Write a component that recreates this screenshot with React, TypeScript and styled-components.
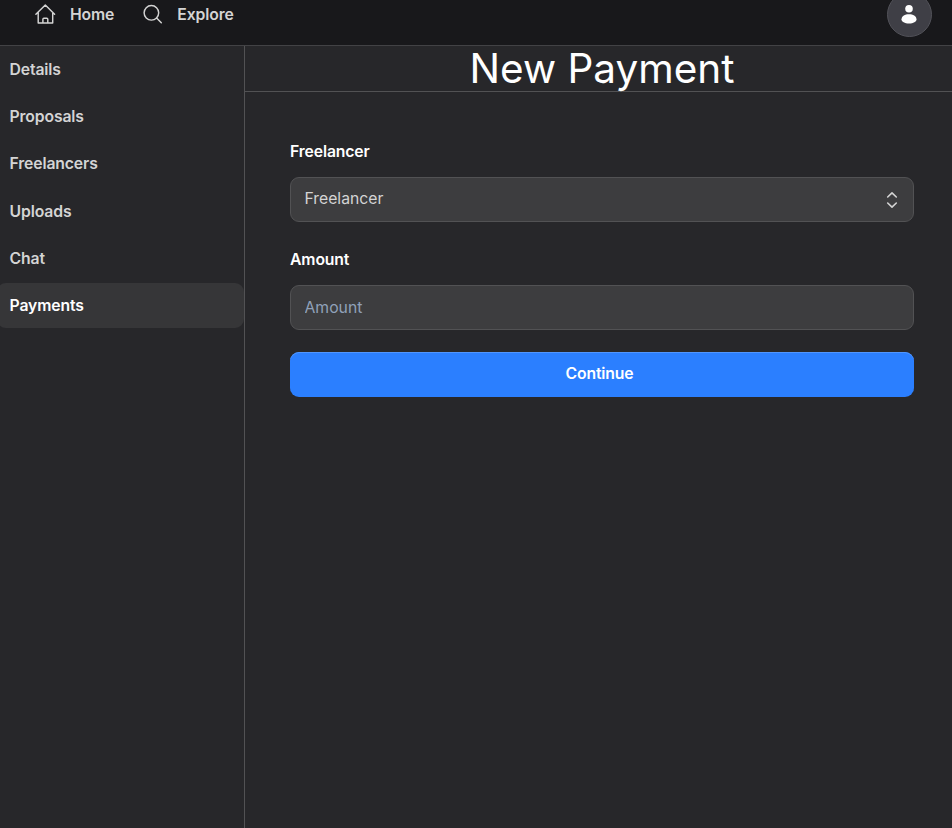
import React from 'react';
import styled, { createGlobalStyle } from 'styled-components';

const GlobalStyle = createGlobalStyle`
  *, *::before, *::after { box-sizing: border-box; }
  body {
    margin: 0;
    background: #27272a;
    color: #fff;
    font-family: Inter, "Liberation Sans", sans-serif;
    font-size: 15.75px;
    line-height: 22.5px;
    overflow: hidden;
  }
  button, input { font: inherit; }
`;

const Page = styled.div`
  height: 828px;
  display: flex;
  flex-direction: column;
  background: #27272a;
`;

const TopBar = styled.header`
  flex: none;
  height: 46px;
  display: flex;
  justify-content: space-between;
  align-items: flex-start;
  padding: 0 20px 0 34px;
  background: #18181b;
  border-bottom: 1px solid #424245;
`;

const Nav = styled.nav`
  display: flex;
  gap: 27px;
  padding-top: 3px;
`;

const NavLink = styled.a`
  display: flex;
  align-items: flex-start;
  gap: 14px;
  color: #d4d4d4;
  font-weight: 600;
  letter-spacing: -0.13px;
  svg { display: block; flex: none; }
  span { padding-top: 1px; }
`;

const Avatar = styled.button`
  width: 45px;
  height: 45px;
  margin-top: -8px;
  padding: 0 1px 1px 0;
  display: grid;
  place-items: center;
  border-radius: 50%;
  border: 1px solid #525259;
  background: #3f3f46;
`;

const Body = styled.div`
  flex: 1;
  display: flex;
  min-height: 0;
`;

const Sidebar = styled.aside`
  width: 245px;
  flex: none;
  display: flex;
  flex-direction: column;
  gap: 2.25px;
  padding-top: 1px;
  border-right: 1px solid #525254;
`;

const SideItem = styled.a<{ $active?: boolean }>`
  height: 45px;
  display: flex;
  align-items: center;
  margin-left: -3px;
  padding: 1.2px 9.5px 0 12.5px;
  border-radius: 9px;
  font-weight: 600;
  letter-spacing: -0.13px;
  color: ${(p) => (p.$active ? '#fff' : '#d4d4d4')};
  background: ${(p) => (p.$active ? '#363638' : 'transparent')};
`;

const Main = styled.main`
  flex: 1;
  min-width: 0;
`;

const Title = styled.h1`
  height: 46px;
  margin: 0;
  padding-left: 7px;
  border-bottom: 1px solid #525254;
  text-align: center;
  font-size: 40.5px;
  line-height: 45px;
  font-weight: 400;
`;

const Form = styled.div`
  display: flex;
  flex-direction: column;
  padding: 49px 38px 0 45px;
`;

const Field = styled.div`
  display: flex;
  flex-direction: column;
  gap: 14px;
  margin-bottom: 27px;
  &:last-of-type { margin-bottom: 22px; }
`;

const Label = styled.label`
  height: 22px;
  font-weight: 600;
  letter-spacing: -0.13px;
`;

const SelectBox = styled.button`
  height: 45px;
  display: flex;
  align-items: center;
  justify-content: space-between;
  padding: 0 14px 0 13.5px;
  border: 1px solid #525254;
  border-radius: 9px;
  background: #3d3d3f;
  color: #d4d4d4;
`;

const Input = styled.input`
  height: 45px;
  width: 100%;
  padding: 0 13.5px;
  border: 1px solid #525254;
  border-radius: 9px;
  background: #3d3d3f;
  color: #fff;
  &::placeholder { color: #90a1b9; opacity: 1; }
`;

const Submit = styled.button`
  height: 45px;
  border: 0;
  border-radius: 9px;
  background: #2b7fff;
  box-shadow: inset 0 1px #5096ff;
  color: #fff;
  font-weight: 600;
  letter-spacing: -0.13px;
  padding: 0 5px 0 0;
`;

const HomeIcon = () => (
  <svg width="22" height="22" viewBox="0 0 22 22" fill="none" stroke="currentColor" strokeWidth="1.45" strokeLinecap="round" strokeLinejoin="round">
    <path d="M1.9 11.2 11.3 2l9.3 9.2M4.2 9.3V20h14.5V9.3M8.9 20v-3.7c0-.6.4-1 1-1h2.9c.6 0 1 .4 1 1V20" />
  </svg>
);

const SearchIcon = () => (
  <svg width="22" height="22" viewBox="0 0 22 22" fill="none" stroke="currentColor" strokeWidth="1.45" strokeLinecap="round">
    <circle cx="10.4" cy="9.8" r="7.3" />
    <path d="m15.6 15 4.7 4.7" />
  </svg>
);

const PersonIcon = () => (
  <svg width="22" height="22" viewBox="0 0 22 22" fill="#fff">
    <circle cx="11" cy="5.7" r="3.8" />
    <path d="M3.5 16.2c.3-3.3 3.3-5 7.5-5s7.2 1.7 7.5 5c0 2.7-3.2 4.2-7.5 4.2s-7.5-1.5-7.5-4.2Z" />
  </svg>
);

const SortIcon = () => (
  <svg width="14" height="20" viewBox="0 0 14 20" fill="none" stroke="#d4d4d4" strokeWidth="1.6" strokeLinecap="round" strokeLinejoin="round">
    <path d="m2.7 7 4.3-4.1L11.3 7M2.7 13l4.3 4.1 4.3-4.1" />
  </svg>
);

const sections = ['Details', 'Proposals', 'Freelancers', 'Uploads', 'Chat', 'Payments'];

export default function App() {
  return (
    <Page>
      <GlobalStyle />
      <TopBar>
        <Nav>
          <NavLink><HomeIcon /><span>Home</span></NavLink>
          <NavLink><SearchIcon /><span>Explore</span></NavLink>
        </Nav>
        <Avatar aria-label="Account"><PersonIcon /></Avatar>
      </TopBar>
      <Body>
        <Sidebar>
          {sections.map((name) => (
            <SideItem key={name} $active={name === 'Payments'}>{name}</SideItem>
          ))}
        </Sidebar>
        <Main>
          <Title>New Payment</Title>
          <Form>
            <Field>
              <Label>Freelancer</Label>
              <SelectBox><span>Freelancer</span><SortIcon /></SelectBox>
            </Field>
            <Field>
              <Label htmlFor="amount">Amount</Label>
              <Input id="amount" placeholder="Amount" />
            </Field>
            <Submit>Continue</Submit>
          </Form>
        </Main>
      </Body>
    </Page>
  );
}
